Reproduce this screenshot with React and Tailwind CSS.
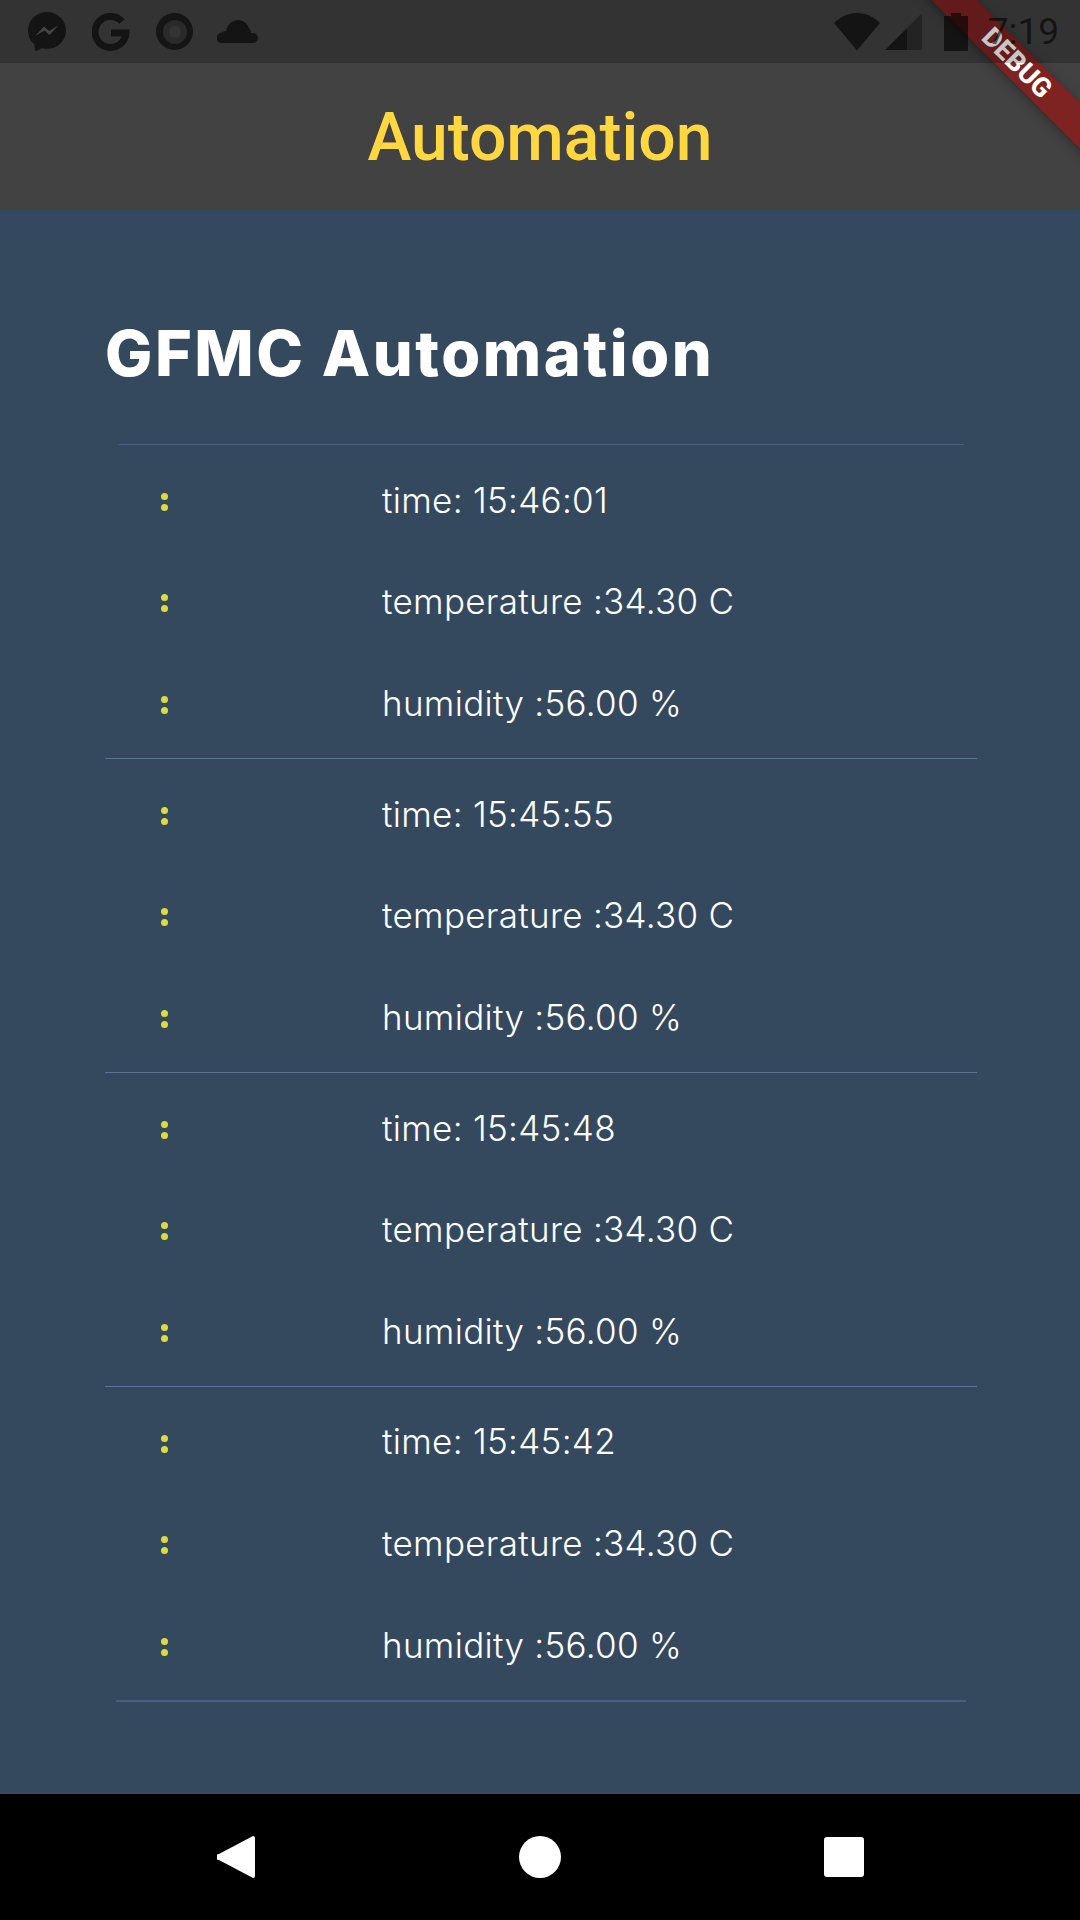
const readings = [
  { time: "15:46:01" },
  { time: "15:45:55" },
  { time: "15:45:48" },
  { time: "15:45:42" },
];

// status bar sits over the app bar and the banner, like the system scrim does
function StatusBar() {
  return (
    <div className="absolute top-0 left-0 z-10 flex items-center w-full h-[63px] bg-black/[0.22] text-black/60">
      <div className="flex items-center ml-[28px]">
        <svg width="38" height="42" viewBox="0 0 38 42" className="mt-[2px]">
          <path fill="currentColor" d="M19 0C8.500 0 0 8 0 18.500c0 5.500 2.300 10.300 6.100 13.700l1.200 7.300 6.500-3.300c1.700.4 3.400.6 5.200.6 10.500 0 19-8 19-18.300S29.500 0 19 0z" />
          <path fill="#454545" d="M7 24l9-9.500 5 4.500 9.500-5.500-9 9.500-5-4.500z" />
        </svg>
        <svg width="38" height="38" viewBox="0 0 38 38" className="ml-[26px]">
          <path fill="none" stroke="currentColor" strokeWidth="7" d="M30 8.500A15.500 15.500 0 1 0 34 20H19" />
        </svg>
        <div className="flex items-center justify-center w-[37px] h-[37px] ml-[26px] rounded-full bg-[#151515]">
          <div className="flex items-center justify-center w-[24px] h-[24px] rounded-full bg-[#2a2a2a]">
            <div className="w-[12px] h-[12px] rounded-full bg-[#333333]" />
          </div>
        </div>
        <svg width="41" height="23" viewBox="0 0 41 23" className="ml-[24px]">
          <path fill="currentColor" d="M5 23a5 5 0 0 1-1-10c1-1 3-2 5-2 1-6 6-11 12-11 5 0 9 3 11 8 1 1 2 3 2 5h2a5 5 0 0 1 0 10z" />
        </svg>
      </div>
      <div className="flex items-center ml-auto mr-[21px]">
        <svg width="46" height="38" viewBox="0 0 46 38">
          <path fill="currentColor" d="M23 37.500L0 10C6 4 14 0 23 0s17 4 23 10z" />
        </svg>
        <svg width="37" height="37" viewBox="0 0 37 37" className="ml-[5px]">
          <path fill="#232323" d="M37 0v37H22V15z" />
          <path fill="currentColor" d="M22 15v22H0z" />
        </svg>
        <svg width="24" height="38" viewBox="0 0 24 38" className="ml-[22px]">
          <path fill="currentColor" d="M7 0h10v3h7v35H0V3h7z" />
        </svg>
        <span className="ml-[20px] font-['Roboto',sans-serif] text-[37px] leading-[38px]">7:19</span>
      </div>
    </div>
  );
}

function DebugBanner() {
  return (
    <div className="absolute left-[867px] top-[47px] flex items-center justify-center w-[300px] h-[32px] rotate-45 bg-[#a60d0d]/60 shadow-[0_2px_12px_rgba(0,0,0,0.35)]">
      <span className="font-['Roboto',sans-serif] font-extrabold text-[27px] leading-none text-white">DEBUG</span>
    </div>
  );
}

function Reading({ label }) {
  return (
    <div className="flex items-center h-[101.67px]">
      <div className="flex flex-col items-center gap-[4px] w-[118px] mt-[4px]">
        <div className="w-[7px] h-[7px] rounded-full bg-[#dcdc3f]" />
        <div className="w-[7px] h-[7px] rounded-full bg-[#dcdc3f]" />
      </div>
      <div className="ml-[159px] text-[35px] font-light tracking-[0.3px] text-white">{label}</div>
    </div>
  );
}

export default function App() {
  return (
    <div className="relative flex flex-col w-[1080px] h-[1920px] overflow-hidden font-['Inter',sans-serif]">
      <StatusBar />
      <div className="flex items-center justify-center h-[210px] pt-[65px] bg-[#424242]">
        <h1 className="font-['Roboto',sans-serif] font-medium text-[66px] text-[#ffd740]">Automation</h1>
      </div>
      <main className="flex-1 flex flex-col pl-[105px] pr-[103px] bg-[#35495e]">
        <h2 className="mt-[103px] h-[80px] text-[63px] leading-[80px] font-extrabold tracking-[2.5px] text-white">GFMC Automation</h2>
        <div className="mt-[51px] mx-[13px] h-px bg-[#46617f]" />
        {readings.map((r, i) => (
          <div key={r.time}>
            <div className="py-[4px]">
              <Reading label={`time: ${r.time}`} />
              <Reading label="temperature :34.30 C" />
              <Reading label="humidity :56.00 %" />
            </div>
            <div className={i === 3 ? "mx-[11px] h-[2px] bg-[#46617f]" : "h-px bg-[#5a7696]"} />
          </div>
        ))}
      </main>
      <nav className="flex items-center h-[126px] bg-black">
        <svg width="38" height="42" viewBox="0 0 38 42" className="ml-[217px]">
          <path fill="white" d="M36 0a2 2 0 0 1 2 2v38a2 2 0 0 1-2 2L2 24a3 3 0 0 1 0-6z" />
        </svg>
        <div className="w-[42px] h-[42px] ml-[264px] rounded-full bg-white" />
        <div className="w-[40px] h-[40px] ml-[263px] rounded-[3px] bg-white" />
      </nav>
      <DebugBanner />
    </div>
  );
}
